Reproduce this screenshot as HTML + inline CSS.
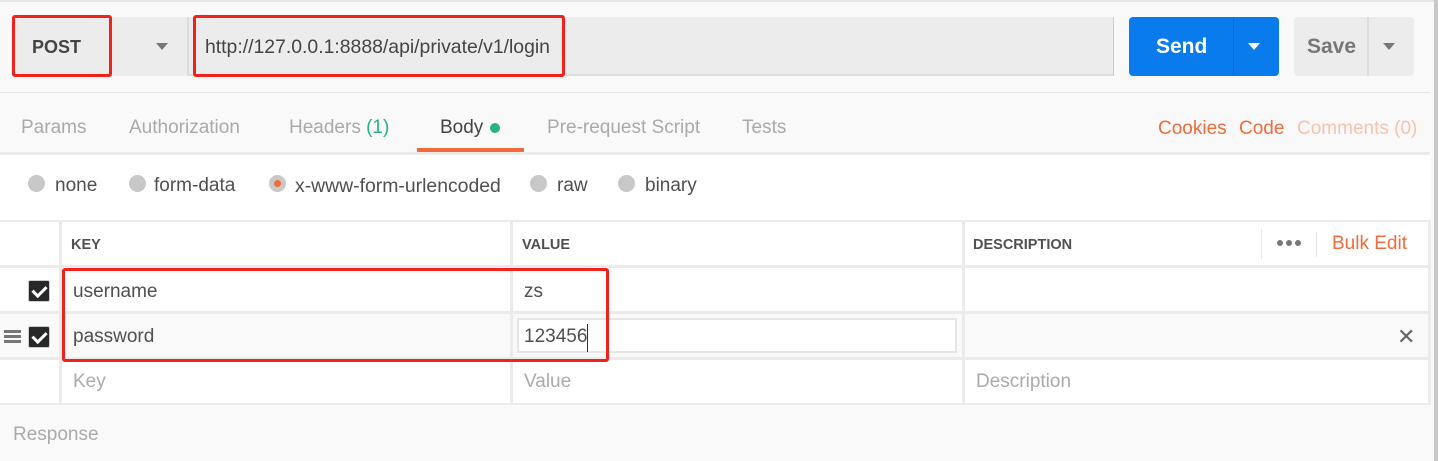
<!DOCTYPE html>
<html><head><style>
*{box-sizing:border-box;margin:0;padding:0}
body{width:1438px;height:461px;background:#f9f9f9;font-family:"Liberation Sans",sans-serif;position:relative;overflow:hidden;color:#505050}
.a{position:absolute}
.t{font-size:19px;white-space:nowrap}
.cell{position:absolute;background:#fff}
.radio{position:absolute;width:17px;height:17px;border-radius:50%;background:#c8c8c8;top:175px}
.cb{position:absolute;width:22px;height:22px;background:#282828;border-radius:2px;border:1px solid #ccc}
.cb:after{content:"";position:absolute;left:6px;top:2px;width:6px;height:11px;border:solid #fff;border-width:0 3px 3px 0;transform:rotate(45deg)}
.red{position:absolute;border:3px solid #f2221b;border-radius:3px}
</style></head><body>
<div class="a" style="left:0;top:0;width:1438px;height:2px;background:#e6e6e6"></div>
<div class="a" style="left:1434px;top:0;width:4px;height:461px;background:#c8c8c8"></div>
<!-- method -->
<div class="a" style="left:12px;top:17px;width:175px;height:59px;background:#ececec;border-radius:3px 0 0 3px"></div>
<div class="a t" style="left:32px;top:37px;font-weight:bold;font-size:18px;color:#444">POST</div>
<div class="a" style="left:156px;top:43px;border:6px solid transparent;border-top:7px solid #777"></div>
<div class="a" style="left:187px;top:17px;width:2px;height:59px;background:#ddd"></div>
<div class="a" style="left:189px;top:17px;width:925px;height:59px;background:#ececec;border-right:1px solid #ccc;border-bottom:2px solid #ddd"></div>
<div class="a t" style="left:205px;top:36px;color:#444;font-size:19.4px">http://127.0.0.1:8888/api/private/v1/login</div>
<div class="red" style="left:12px;top:15px;width:100px;height:62px"></div>
<div class="red" style="left:193px;top:15px;width:372px;height:62px"></div>
<!-- send -->
<div class="a" style="left:1129px;top:17px;width:150px;height:59px;background:#097bed;border-radius:4px"></div>
<div class="a" style="left:1233px;top:17px;width:1px;height:59px;background:#0a6fd4"></div>
<div class="a t" style="left:1156px;top:35px;color:#fff;font-weight:bold;font-size:21px">Send</div>
<div class="a" style="left:1248px;top:43px;border:6px solid transparent;border-top:7px solid #fff"></div>
<div class="a" style="left:1294px;top:17px;width:120px;height:59px;background:#ececec;border-radius:4px"></div>
<div class="a" style="left:1367px;top:17px;width:2px;height:59px;background:#ddd"></div>
<div class="a t" style="left:1307px;top:35px;color:#777;font-weight:bold;font-size:21px">Save</div>
<div class="a" style="left:1383px;top:43px;border:6px solid transparent;border-top:7px solid #777"></div>
<div class="a" style="left:0;top:92px;width:1430px;height:1px;background:#e6e6e6"></div>
<!-- tabs -->
<div class="a t" style="left:21px;top:117px;color:#aaa">Params</div>
<div class="a t" style="left:129px;top:117px;color:#aaa">Authorization</div>
<div class="a t" style="left:289px;top:117px;color:#aaa">Headers <span style="color:#26b47f">(1)</span></div>
<div class="a t" style="left:440px;top:117px;color:#444">Body</div>
<div class="a" style="left:490px;top:123px;width:10px;height:10px;border-radius:50%;background:#26b47f"></div>
<div class="a t" style="left:547px;top:117px;color:#aaa">Pre-request Script</div>
<div class="a t" style="left:742px;top:117px;color:#aaa">Tests</div>
<div class="a t" style="left:1158px;top:118px;color:#f26b3a">Cookies</div>
<div class="a t" style="left:1239px;top:118px;color:#f26b3a">Code</div>
<div class="a t" style="left:1297px;top:118px;color:#f8c3ad">Comments (0)</div>
<div class="a" style="left:417px;top:148px;width:107px;height:4px;background:#f26b3a"></div>
<div class="a" style="left:0;top:152px;width:1430px;height:3px;background:#ebebeb"></div>
<div class="a" style="left:0;top:155px;width:1430px;height:65px;background:#fff"></div>
<div class="radio" style="left:28px"></div><div class="a t" style="left:55px;top:175px">none</div>
<div class="radio" style="left:129px"></div><div class="a t" style="left:154px;top:175px">form-data</div>
<div class="radio" style="left:269px"></div><div class="a" style="left:274px;top:180px;width:7px;height:7px;border-radius:50%;background:#f26b3a"></div>
<div class="a t" style="left:295px;top:175px;font-size:19.4px">x-www-form-urlencoded</div>
<div class="radio" style="left:530px"></div><div class="a t" style="left:557px;top:175px">raw</div>
<div class="radio" style="left:618px"></div><div class="a t" style="left:645px;top:175px">binary</div>
<!-- table -->
<div class="a" style="left:0;top:220px;width:1431px;height:185px;background:#ebebeb"></div>
<div class="cell" style="left:0;top:222px;width:59px;height:43px"></div>
<div class="cell" style="left:0;top:268px;width:59px;height:43px"></div>
<div class="cell" style="left:0;top:314px;width:59px;height:43px;background:#f9f9f9"></div>
<div class="cell" style="left:0;top:360px;width:59px;height:43px"></div>
<div class="cell" style="left:62px;top:222px;width:448px;height:43px"></div>
<div class="cell" style="left:513px;top:222px;width:449px;height:43px"></div>
<div class="cell" style="left:965px;top:222px;width:463px;height:43px"></div>
<div class="cell" style="left:62px;top:268px;width:448px;height:43px"></div>
<div class="cell" style="left:513px;top:268px;width:449px;height:43px"></div>
<div class="cell" style="left:965px;top:268px;width:463px;height:43px"></div>
<div class="cell" style="left:62px;top:314px;width:448px;height:43px;background:#f9f9f9"></div>
<div class="cell" style="left:513px;top:314px;width:449px;height:43px;background:#f9f9f9"></div>
<div class="cell" style="left:517px;top:318px;width:440px;height:35px;border:2px solid #e6e6e6"></div>
<div class="cell" style="left:965px;top:314px;width:463px;height:43px;background:#f9f9f9"></div>
<div class="cell" style="left:62px;top:360px;width:448px;height:43px"></div>
<div class="cell" style="left:513px;top:360px;width:449px;height:43px"></div>
<div class="cell" style="left:965px;top:360px;width:463px;height:43px"></div>
<div class="a t" style="left:71px;top:237px;font-size:14.5px;font-weight:bold;color:#505050">KEY</div>
<div class="a t" style="left:522px;top:237px;font-size:14.5px;font-weight:bold;color:#505050">VALUE</div>
<div class="a t" style="left:973px;top:237px;font-size:14.5px;font-weight:bold;color:#505050">DESCRIPTION</div>
<div class="a" style="left:1261px;top:229px;width:1px;height:30px;background:#e6e6e6"></div>
<div class="a" style="left:1277px;top:240px;width:6px;height:6px;border-radius:50%;background:#777;box-shadow:9px 0 0 #777,18px 0 0 #777"></div>
<div class="a" style="left:1316px;top:232px;width:1px;height:25px;background:#e6e6e6"></div>
<div class="a t" style="left:1332px;top:233px;color:#f26b3a">Bulk Edit</div>
<div class="cb" style="left:28px;top:280px"></div>
<div class="cb" style="left:28px;top:326px"></div>
<div class="a" style="left:4px;top:330px;width:17px;height:3px;background:#777;box-shadow:0 5px 0 #777,0 10px 0 #777"></div>
<div class="a t" style="left:73px;top:281px">username</div>
<div class="a t" style="left:524px;top:281px">zs</div>
<div class="a t" style="left:73px;top:326px">password</div>
<div class="a t" style="left:524px;top:326px">123456</div>
<div class="a" style="left:587px;top:324px;width:1px;height:28px;background:#333"></div>
<div class="a t" style="left:1397px;top:324px;font-size:22px;color:#666">✕</div>
<div class="a t" style="left:73px;top:371px;color:#aaa">Key</div>
<div class="a t" style="left:524px;top:371px;color:#aaa">Value</div>
<div class="a t" style="left:976px;top:371px;color:#aaa">Description</div>
<div class="red" style="left:62px;top:268px;width:547px;height:94px"></div>
<div class="a t" style="left:13px;top:424px;color:#aaa;font-size:19px">Response</div>
</body></html>
